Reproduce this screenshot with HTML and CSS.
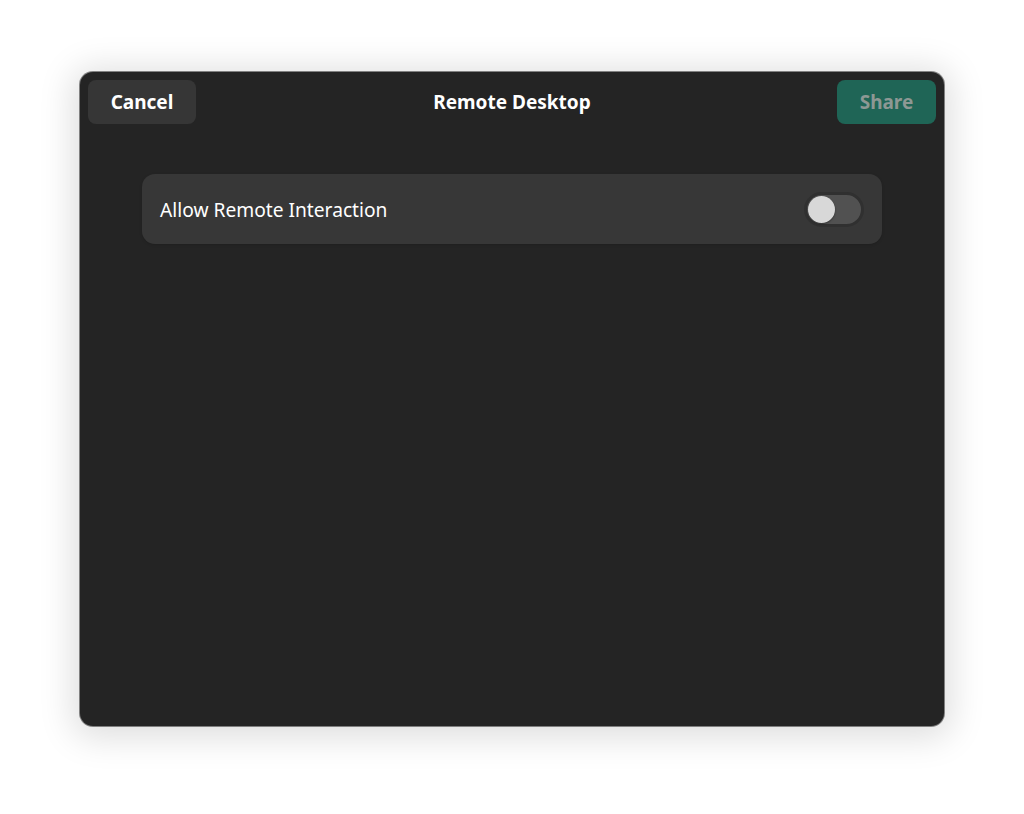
FILE: index.html
```html
<!DOCTYPE html>
<html>
<head>
<meta charset="utf-8">
<link rel="stylesheet" href="styles.css">
</head>
<body>
<div class="window">
  <header class="headerbar">
    <div class="start"><button class="btn btn-cancel">Cancel</button></div>
    <div class="title">Remote Desktop</div>
    <div class="end"><button class="btn btn-share">Share</button></div>
  </header>
  <main class="content">
    <div class="row">
      <span class="row-label">Allow Remote Interaction</span>
      <span class="switch"><span class="knob"></span></span>
    </div>
  </main>
</div>
</body>
</html>
```
FILE: styles.css
```css
html, body {
  margin: 0;
  padding: 0;
  background: #ffffff;
}
body {
  padding: 72px 80px 88px 80px;
  font-family: "Noto Sans", "Open Sans", sans-serif;
}
.window {
  width: 864px;
  height: 654px;
  box-sizing: border-box;
  background: #242424;
  border-radius: 13px;
  box-shadow: 0 0 0 1px rgba(0,0,0,0.45), 0 4px 34px 8px rgba(0,0,0,0.13);
  display: flex;
  flex-direction: column;
  overflow: hidden;
}
.headerbar {
  display: grid;
  grid-template-columns: 1fr auto 1fr;
  align-items: center;
  padding: 8px;
}
.start {
  display: flex;
  justify-content: flex-start;
}
.end {
  display: flex;
  justify-content: flex-end;
}
.btn {
  height: 44px;
  border: none;
  border-radius: 8px;
  font-family: "Noto Sans", sans-serif;
  font-weight: 700;
  font-size: 19px;
  padding: 0;
  cursor: default;
}
.btn-cancel {
  width: 108px;
  background: #363636;
  color: #ffffff;
}
.btn-share {
  width: 99px;
  background: #1f6556;
  color: #8d9894;
}
.title {
  color: #ffffff;
  font-weight: 700;
  font-size: 19px;
  text-align: center;
}
.content {
  flex: 1;
  display: flex;
  flex-direction: column;
  align-items: center;
  padding-top: 42px;
}
.row {
  width: 740px;
  height: 70px;
  box-sizing: border-box;
  background: #373737;
  border-radius: 13px;
  display: flex;
  align-items: center;
  justify-content: space-between;
  padding: 0 18px 0 18px;
  box-shadow: 0 1px 3px rgba(0,0,0,0.15);
}
.row-label {
  color: #ffffff;
  font-size: 19.2px;
}
.switch {
  width: 60px;
  height: 35px;
  box-sizing: border-box;
  border-radius: 18px;
  background: #515151;
  border: 3px solid #303030;
  display: flex;
  align-items: center;
  padding-left: 1px;
}
.knob {
  width: 27px;
  height: 27px;
  border-radius: 50%;
  background: #d8d8d8;
  box-shadow: 0 1px 2px rgba(0,0,0,0.4);
}
```
